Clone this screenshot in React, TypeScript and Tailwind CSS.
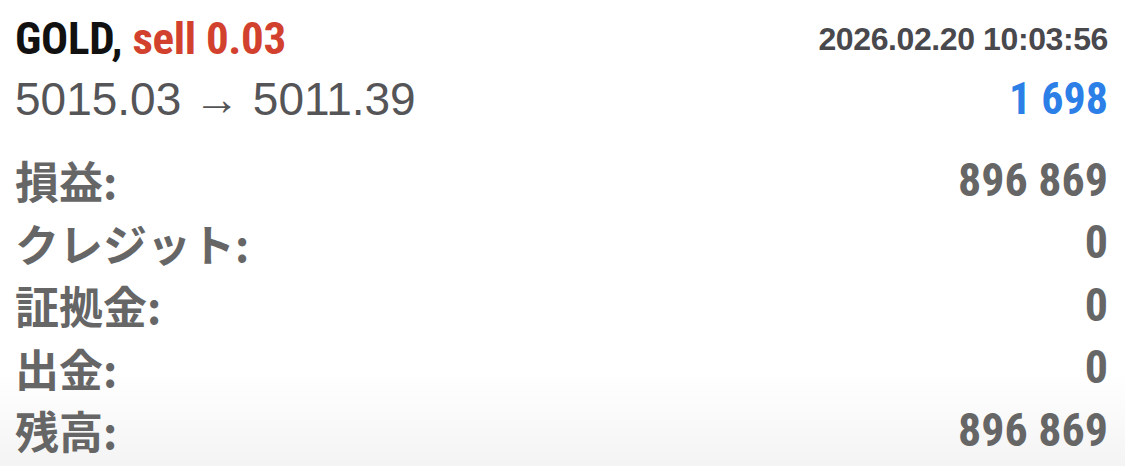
import React from 'react'

// condensed face for headline numbers, plain face for the price line
const narrow = "font-['Liberation_Sans_Narrow','Roboto_Condensed','Liberation_Sans',sans-serif]"
const plain = "font-['Liberation_Sans','Helvetica',sans-serif]"
const cjk = "font-['Noto_Sans_CJK_JP','Noto_Sans',sans-serif]"

const rows: { label: string; value: string }[] = [
  { label: '損益:', value: '896 869' },
  { label: 'クレジット:', value: '0' },
  { label: '証拠金:', value: '0' },
  { label: '出金:', value: '0' },
  { label: '残高:', value: '896 869' },
]

export default function App() {
  return (
    <div className="h-[466px] w-[1125px] overflow-hidden bg-gradient-to-b from-white from-80% to-[#f4f4f4] pl-[15px] pr-[17px] pt-[9px]">
      <div className="flex h-[60px] items-center justify-between">
        <div className={`${narrow} text-[45px] font-bold tracking-[-0.3px] text-[#111]`}>
          GOLD, <span className="text-[#d2412d]">sell 0.03</span>
        </div>
        <div className={`${plain} text-[32px] font-bold tracking-[-0.4px] text-[#48484d]`}>
          2026.02.20 10:03:56
        </div>
      </div>
      <div className="flex h-[60px] items-center justify-between">
        <div className={`${plain} text-[46px] text-[#555558]`}>5015.03 → 5011.39</div>
        <div className={`${narrow} text-[44px] font-bold text-[#2d7fe8]`}>1 698</div>
      </div>
      <div className="mt-[20px] flex flex-col">
        {rows.map((r) => (
          <div key={r.label} className="flex h-[62.5px] items-center justify-between text-[#666]">
            <span className={`${cjk} text-[44px] font-bold`}>{r.label}</span>
            <span className={`${narrow} text-[46px] font-bold`}>{r.value}</span>
          </div>
        ))}
      </div>
    </div>
  )
}
